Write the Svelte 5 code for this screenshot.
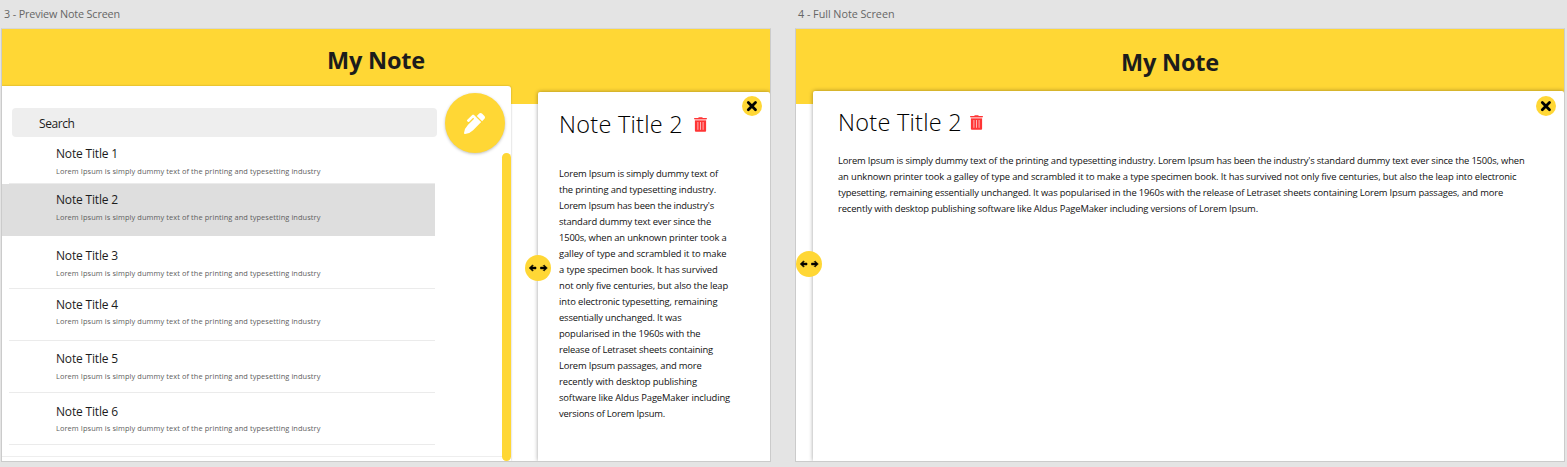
<script>
  const summary = 'Lorem Ipsum is simply dummy text of the printing and typesetting industry';
  const notes = [
    { title: 'Note Title 1', height: 47, top: 9, gap: 3 },
    { title: 'Note Title 2', height: 52, top: 8, gap: 3, selected: true },
    { title: 'Note Title 3', height: 53, top: 12, gap: 3 },
    { title: 'Note Title 4', height: 52, top: 8, gap: 2 },
    { title: 'Note Title 5', height: 52, top: 10, gap: 3 },
    { title: 'Note Title 6', height: 52, top: 11, gap: 2 }
  ];
  const previewLines = [
    ['Lorem Ipsum is simply dummy text of', 159],
    ['the printing and typesetting industry.', 157],
    ["Lorem Ipsum has been the industry's", 155],
    ['standard dummy text ever since the', 152],
    ['1500s, when an unknown printer took a', 167.5],
    ['galley of type and scrambled it to make', 167.5],
    ['a type specimen book. It has survived', 158.5],
    ['not only five centuries, but also the leap', 169],
    ['into electronic typesetting, remaining', 158.5],
    ['essentially unchanged. It was', 122.5],
    ['popularised in the 1960s with the', 141.5],
    ['release of Letraset sheets containing', 154],
    ['Lorem Ipsum passages, and more', 142.5],
    ['recently with desktop publishing', 138],
    ['software like Aldus PageMaker including', 171],
    ['versions of Lorem Ipsum.', 106]
  ];
  const fullLines = [
    ["Lorem Ipsum is simply dummy text of the printing and typesetting industry. Lorem Ipsum has been the industry's standard dummy text ever since the 1500s, when", 686.5],
    ['an unknown printer took a galley of type and scrambled it to make a type specimen book. It has survived not only five centuries, but also the leap into electronic', 678.5],
    ['typesetting, remaining essentially unchanged. It was popularised in the 1960s with the release of Letraset sheets containing Lorem Ipsum passages, and more', 665],
    ['recently with desktop publishing software like Aldus PageMaker including versions of Lorem Ipsum.', 420]
  ];

  // Tracks a single line of text so that it fills the given measure.
  function fit(node, width) {
    node.style.letterSpacing = '0px';
    const natural = node.getBoundingClientRect().width;
    node.style.letterSpacing = (width - natural) / node.textContent.length + 'px';
  }
</script>

{#snippet trash()}
  <svg class="trash" viewBox="0 0 13 15" width="13" height="15">
    <path fill="#ff3535" d="M4.2.9Q4.4.3 5 .3h3q.6 0 .8.6H12.5q.4 0 .4.4v.9H.1v-.9q0-.4.4-.4z" />
    <path fill="#ff9a9a" d="M.9 2.2h11.2v1.4H.9z" />
    <path fill="#ff3535" d="M.9 3.6h11.2v10.1q0 1-1 1H1.9q-1 0-1-1z" />
    <path stroke="#ffb3b3" stroke-width="1" d="M3.9 5v7.8M6.5 5v7.8M9.1 5v7.8" />
  </svg>
{/snippet}

{#snippet close()}
  <button class="close" aria-label="Close">
    <svg viewBox="0 0 20 20" width="20" height="20"><path stroke="#000" stroke-width="2.8" stroke-linecap="round" d="M6.3 6.6l7.2 7.2M13.5 6.6l-7.2 7.2" /></svg>
  </button>
{/snippet}

{#snippet handle()}
  <button class="handle" aria-label="Resize">
    <svg viewBox="0 0 26 26" width="26" height="26"><path stroke="#000" stroke-width=".6" stroke-linejoin="round" d="M4.2 13l3.3-3.1.7.7-1.2 1.5h4v1.8h-4l1.2 1.5-.7.7zM22.3 13l-3.3-3.1-.7.7 1.2 1.5h-4v1.8h4l-1.2 1.5.7.7z" /></svg>
  </button>
{/snippet}

<main>
  <section class="screen">
    <h2><span use:fit={116}>3 - Preview Note Screen</span></h2>
    <div class="board">
      <header><span use:fit={98}>My Note</span></header>
      <div class="panes">
        <div class="list">
          <div class="search"><span use:fit={35.5}>Search</span></div>
          {#each notes as note}
            <div class="note" class:selected={note.selected} style:height="{note.height}px" style:padding-top="{note.top}px" style:row-gap="{note.gap}px">
              <strong><span use:fit={62}>{note.title}</span></strong>
              <small><span use:fit={264.5}>{summary}</span></small>
            </div>
          {/each}
          <div class="end"></div>
          <button class="edit" aria-label="Edit">
            <svg viewBox="0 0 512 512" width="21" height="21"><path fill="#fff" d="M497.94 74.17l-60.11-60.11c-18.75-18.75-49.16-18.75-67.91 0l-56.55 56.55 128.02 128.02 56.55-56.55c18.75-18.75 18.75-49.15 0-67.91zm-246.8-20.53c-15.62-15.62-40.94-15.62-56.56 0L75.8 172.43c-6.25 6.25-6.25 16.38 0 22.62l22.63 22.63c6.25 6.25 16.38 6.25 22.63 0l101.82-101.82 22.63 22.62L93.95 290.03A327.038 327.038 0 0 0 .17 485.11l-.03.23c-1.7 15.28 11.21 28.2 26.49 26.51a327.02 327.02 0 0 0 195.34-93.8l196.79-196.79-82.77-82.77-84.85-84.85z" /></svg>
          </button>
          <div class="scrollbar"></div>
        </div>
        <article class="preview">
          <h1><span use:fit={124}>Note Title 2</span>{@render trash()}</h1>
          <div class="text">
            {#each previewLines as [line, width]}
              <p><span use:fit={width}>{line}</span></p>
            {/each}
          </div>
          {@render close()}
          {@render handle()}
        </article>
      </div>
    </div>
  </section>

  <section class="screen">
    <h2><span use:fit={96.5}>4 - Full Note Screen</span></h2>
    <div class="board full">
      <header><span use:fit={98}>My Note</span></header>
      <div class="panes">
        <article class="preview">
          <h1><span use:fit={124}>Note Title 2</span>{@render trash()}</h1>
          <div class="text">
            {#each fullLines as [line, width]}
              <p><span use:fit={width}>{line}</span></p>
            {/each}
          </div>
          {@render close()}
          {@render handle()}
        </article>
      </div>
    </div>
  </section>
</main>

<style>
  :global(body) { margin: 0; background: #e4e4e4; overflow: hidden; }
  main {
    display: flex;
    gap: 24px;
    height: 467px;
    padding-left: 1px;
    box-sizing: border-box;
    font-family: 'Segoe UI', 'Open Sans', 'Noto Sans', sans-serif;
    color: #1c1c1c;
  }
  .screen { width: 770px; flex: none; }
  h1, h2, p { margin: 0; font-weight: inherit; }
  span { display: inline-block; white-space: nowrap; }
  h2 { height: 28px; padding-left: 3px; box-sizing: border-box; font-size: 10.8px; line-height: 28px; color: #666; }
  .board {
    height: 434px;
    box-sizing: border-box;
    border: 1px solid #cbcbcb;
    border-top-color: #d6d6d6;
    background: linear-gradient(#ffd735 75px, #fff 75px);
    display: flex;
    flex-direction: column;
    overflow: hidden;
  }
  header { height: 57px; flex: none; padding-left: 325px; font-size: 23.5px; font-weight: 700; line-height: 63px; }
  .full header { height: 62px; line-height: 67px; }
  .panes { flex: 1; display: flex; min-height: 0; }
  .list {
    position: relative;
    width: 509px;
    padding-top: 22px;
    box-sizing: border-box;
    border-radius: 0 3px 0 0;
    background: #fff;
    box-shadow: 0 0 2px rgba(0, 0, 0, .3);
    margin-right: 27px;
    flex: none;
  }
  .search { width: 425px; height: 29px; box-sizing: border-box; margin-left: 10px; padding-left: 27px; border-radius: 4px; background: #eee; font-size: 12px; line-height: 31px; }
  .note { display: flex; flex-direction: column; width: 432.5px; padding-left: 54px; box-sizing: border-box; background: linear-gradient(#ebebeb, #ebebeb) 7px 100% / 426px 1px no-repeat; }
  .selected { background: #dedede; }
  strong { font-size: 12px; font-weight: 400; line-height: 16px; height: 16px; }
  small { font-size: 7.4px; line-height: 12px; height: 12px; color: #606060; }
  .end { margin-top: 11px; height: 1px; background: #eee; }
  .edit { position: absolute; left: 442.5px; top: 7px; width: 60px; height: 60px; box-shadow: 0 1px 3px rgba(0, 0, 0, .25); }
  button { border: 0; padding: 0; border-radius: 50%; background: #ffd735; display: flex; align-items: center; justify-content: center; }
  .scrollbar { position: absolute; right: 0; top: 67px; bottom: 0; width: 9px; border-radius: 5px; background: #ffd735; }
  .preview { position: relative; flex: 1; margin-top: 5.5px; padding: 14.5px 0 0 21px; border-radius: 2px 2px 0 0; background: #fff; box-shadow: 0 0 4px rgba(0, 0, 0, .38); }
  h1 { display: flex; gap: 11px; height: 36px; font-size: 23.5px; font-weight: 300; line-height: 36px; color: #000; }
  .trash { margin-top: 11px; }
  .text { margin-top: 24px; font-size: 9.4px; line-height: 16px; color: #111; }
  p { height: 16px; }
  .close { position: absolute; right: 8.5px; top: 4.5px; width: 20px; height: 20px; }
  .handle { position: absolute; left: -12.7px; top: 163.8px; width: 26px; height: 26px; }
  .full .preview { margin: 0 0 0 17px; padding: 13px 0 0 25px; }
  .full h1 { gap: 8px; }
  .full .text { margin-top: 13px; }
  .full .close { top: 5px; }
  .full .handle { left: -17px; top: 159.5px; }
</style>
